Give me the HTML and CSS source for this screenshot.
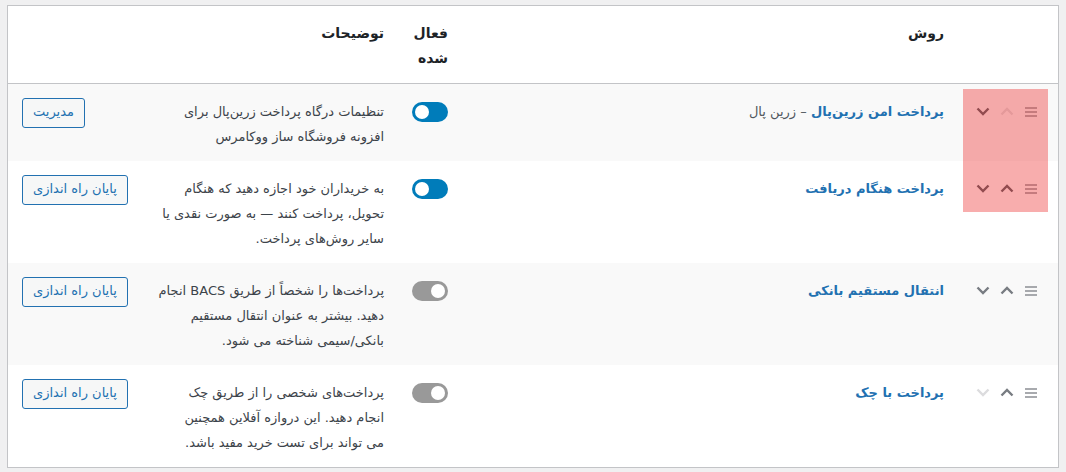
FILE: index.html
```html
<!DOCTYPE html>
<html lang="fa" dir="rtl">
<head>
    <meta charset="UTF-8">
    <meta name="viewport" content="width=device-width, initial-scale=1.0">
    <title>روش‌های پرداخت</title>
    <link rel="stylesheet" href="styles.css">
</head>
<body>
    <div class="wrap">
        <table class="gateways">
            <thead>
                <tr>
                    <th class="col-sort"></th>
                    <th class="col-name">روش</th>
                    <th class="col-status">فعال شده</th>
                    <th class="col-desc">توضیحات</th>
                    <th class="col-action"></th>
                </tr>
            </thead>
            <tbody>
                <tr>
                    <td class="col-sort">
                        <div class="sort-tools">
                            <span class="icon handle"><svg width="12" height="10" viewBox="0 0 12 10"><path d="M0 1h12M0 5h12M0 9h12" stroke="currentColor" stroke-width="1.4"/></svg></span>
                            <span class="icon move disabled"><svg width="14" height="9" viewBox="0 0 14 9"><path d="M1.5 7.5L7 2l5.5 5.5" fill="none" stroke="currentColor" stroke-width="2.4"/></svg></span>
                            <span class="icon move dark"><svg width="14" height="9" viewBox="0 0 14 9"><path d="M1.5 1.5L7 7l5.5-5.5" fill="none" stroke="currentColor" stroke-width="2.4"/></svg></span>
                        </div>
                    </td>
                    <td class="col-name"><a href="#" class="gw-link">پرداخت امن زرین‌پال</a><span class="gw-sub"> – زرین پال</span></td>
                    <td class="col-status"><span class="toggle on"></span></td>
                    <td class="col-desc">تنظیمات درگاه پرداخت زرین‌پال برای افزونه فروشگاه ساز ووکامرس</td>
                    <td class="col-action"><a href="#" class="button">مدیریت</a></td>
                </tr>
                <tr>
                    <td class="col-sort">
                        <div class="sort-tools">
                            <span class="icon handle"><svg width="12" height="10" viewBox="0 0 12 10"><path d="M0 1h12M0 5h12M0 9h12" stroke="currentColor" stroke-width="1.4"/></svg></span>
                            <span class="icon move dark"><svg width="14" height="9" viewBox="0 0 14 9"><path d="M1.5 7.5L7 2l5.5 5.5" fill="none" stroke="currentColor" stroke-width="2.4"/></svg></span>
                            <span class="icon move dark"><svg width="14" height="9" viewBox="0 0 14 9"><path d="M1.5 1.5L7 7l5.5-5.5" fill="none" stroke="currentColor" stroke-width="2.4"/></svg></span>
                        </div>
                    </td>
                    <td class="col-name"><a href="#" class="gw-link">پرداخت هنگام دریافت</a></td>
                    <td class="col-status"><span class="toggle on"></span></td>
                    <td class="col-desc">به خریداران خود اجازه دهید که هنگام تحویل، پرداخت کنند — به صورت نقدی یا سایر روش‌های پرداخت.</td>
                    <td class="col-action"><a href="#" class="button">پایان راه اندازی</a></td>
                </tr>
                <tr>
                    <td class="col-sort">
                        <div class="sort-tools">
                            <span class="icon handle"><svg width="12" height="10" viewBox="0 0 12 10"><path d="M0 1h12M0 5h12M0 9h12" stroke="currentColor" stroke-width="1.4"/></svg></span>
                            <span class="icon move"><svg width="14" height="9" viewBox="0 0 14 9"><path d="M1.5 7.5L7 2l5.5 5.5" fill="none" stroke="currentColor" stroke-width="2.4"/></svg></span>
                            <span class="icon move"><svg width="14" height="9" viewBox="0 0 14 9"><path d="M1.5 1.5L7 7l5.5-5.5" fill="none" stroke="currentColor" stroke-width="2.4"/></svg></span>
                        </div>
                    </td>
                    <td class="col-name"><a href="#" class="gw-link">انتقال مستقیم بانکی</a></td>
                    <td class="col-status"><span class="toggle"></span></td>
                    <td class="col-desc">پرداخت‌ها را شخصاً از طریق BACS انجام دهید. بیشتر به عنوان انتقال مستقیم <span class="nowrap">بانکی/سیمی</span> شناخته می شود.</td>
                    <td class="col-action"><a href="#" class="button">پایان راه اندازی</a></td>
                </tr>
                <tr>
                    <td class="col-sort">
                        <div class="sort-tools">
                            <span class="icon handle"><svg width="12" height="10" viewBox="0 0 12 10"><path d="M0 1h12M0 5h12M0 9h12" stroke="currentColor" stroke-width="1.4"/></svg></span>
                            <span class="icon move"><svg width="14" height="9" viewBox="0 0 14 9"><path d="M1.5 7.5L7 2l5.5 5.5" fill="none" stroke="currentColor" stroke-width="2.4"/></svg></span>
                            <span class="icon move disabled"><svg width="14" height="9" viewBox="0 0 14 9"><path d="M1.5 1.5L7 7l5.5-5.5" fill="none" stroke="currentColor" stroke-width="2.4"/></svg></span>
                        </div>
                    </td>
                    <td class="col-name"><a href="#" class="gw-link">پرداخت با چک</a></td>
                    <td class="col-status"><span class="toggle"></span></td>
                    <td class="col-desc">پرداخت‌های شخصی را از طریق چک <span class="nowrap">انجام دهید.</span> این دروازه آفلاین همچنین <span class="nowrap">می تواند</span> برای تست خرید مفید باشد.</td>
                    <td class="col-action"><a href="#" class="button">پایان راه اندازی</a></td>
                </tr>
            </tbody>
        </table>
        <div class="highlight"></div>
    </div>
</body>
</html>
```

FILE: styles.css
```css
body {
    margin: 0;
    background: #f0f0f1;
    font-family: "DejaVu Sans", Tahoma, sans-serif;
    font-size: 13px;
    color: #3c434a;
}
.wrap {
    position: relative;
    padding: 5px 7px;
}
.gateways {
    width: 100%;
    table-layout: fixed;
    border-collapse: collapse;
    background: #fff;
    border: 1px solid #c3c4c7;
}
.gateways th,
.gateways td {
    text-align: right;
    vertical-align: top;
    padding: 15px 10px 12px;
    line-height: 25px;
}
.gateways th {
    font-size: 14px;
    font-weight: bold;
    color: #1d2327;
    border-bottom: 1px solid #c3c4c7;
}
.gateways tbody tr:nth-child(odd) {
    background: #f9f9f9;
}
.gateways .col-sort {
    width: 84px;
}
.col-name {
    width: 476px;
}
.col-status {
    width: 44px;
}
.col-desc {
    width: 236px;
}
.nowrap {
    white-space: nowrap;
}
.gateways .col-action {
    text-align: left;
    padding-left: 14px;
}
.sort-tools {
    display: flex;
    align-items: center;
    gap: 10px;
    height: 25px;
    padding-right: 10px;
}
.icon {
    display: flex;
    align-items: center;
    justify-content: center;
    width: 14px;
}
.handle {
    color: #8c8f94;
}
.move {
    color: #787c82;
}
.move.dark {
    color: #50575e;
}
.move.disabled {
    color: #dcdcde;
}
.gw-link {
    color: #2271b1;
    font-weight: bold;
    font-size: 13px;
    text-decoration: none;
}
.gw-sub {
    color: #50575e;
}
.toggle {
    display: block;
    position: relative;
    width: 36px;
    height: 20px;
    margin-top: 3px;
    border-radius: 10px;
    background: #999;
}
.toggle::after {
    content: "";
    position: absolute;
    top: 3px;
    right: 3px;
    width: 14px;
    height: 14px;
    border-radius: 50%;
    background: #fff;
}
.toggle.on {
    background: #007cba;
}
.toggle.on::after {
    right: auto;
    left: 3px;
}
.button {
    display: inline-block;
    height: 28px;
    line-height: 26px;
    margin-top: -1px;
    padding: 0 10px;
    border: 1px solid #2271b1;
    border-radius: 3px;
    background: #f6f7f7;
    color: #2271b1;
    font-size: 13px;
    text-decoration: none;
    white-space: nowrap;
}
.highlight {
    position: absolute;
    top: 89px;
    left: 963px;
    width: 85px;
    height: 123px;
    background: rgba(238, 60, 60, 0.42);
}
```
